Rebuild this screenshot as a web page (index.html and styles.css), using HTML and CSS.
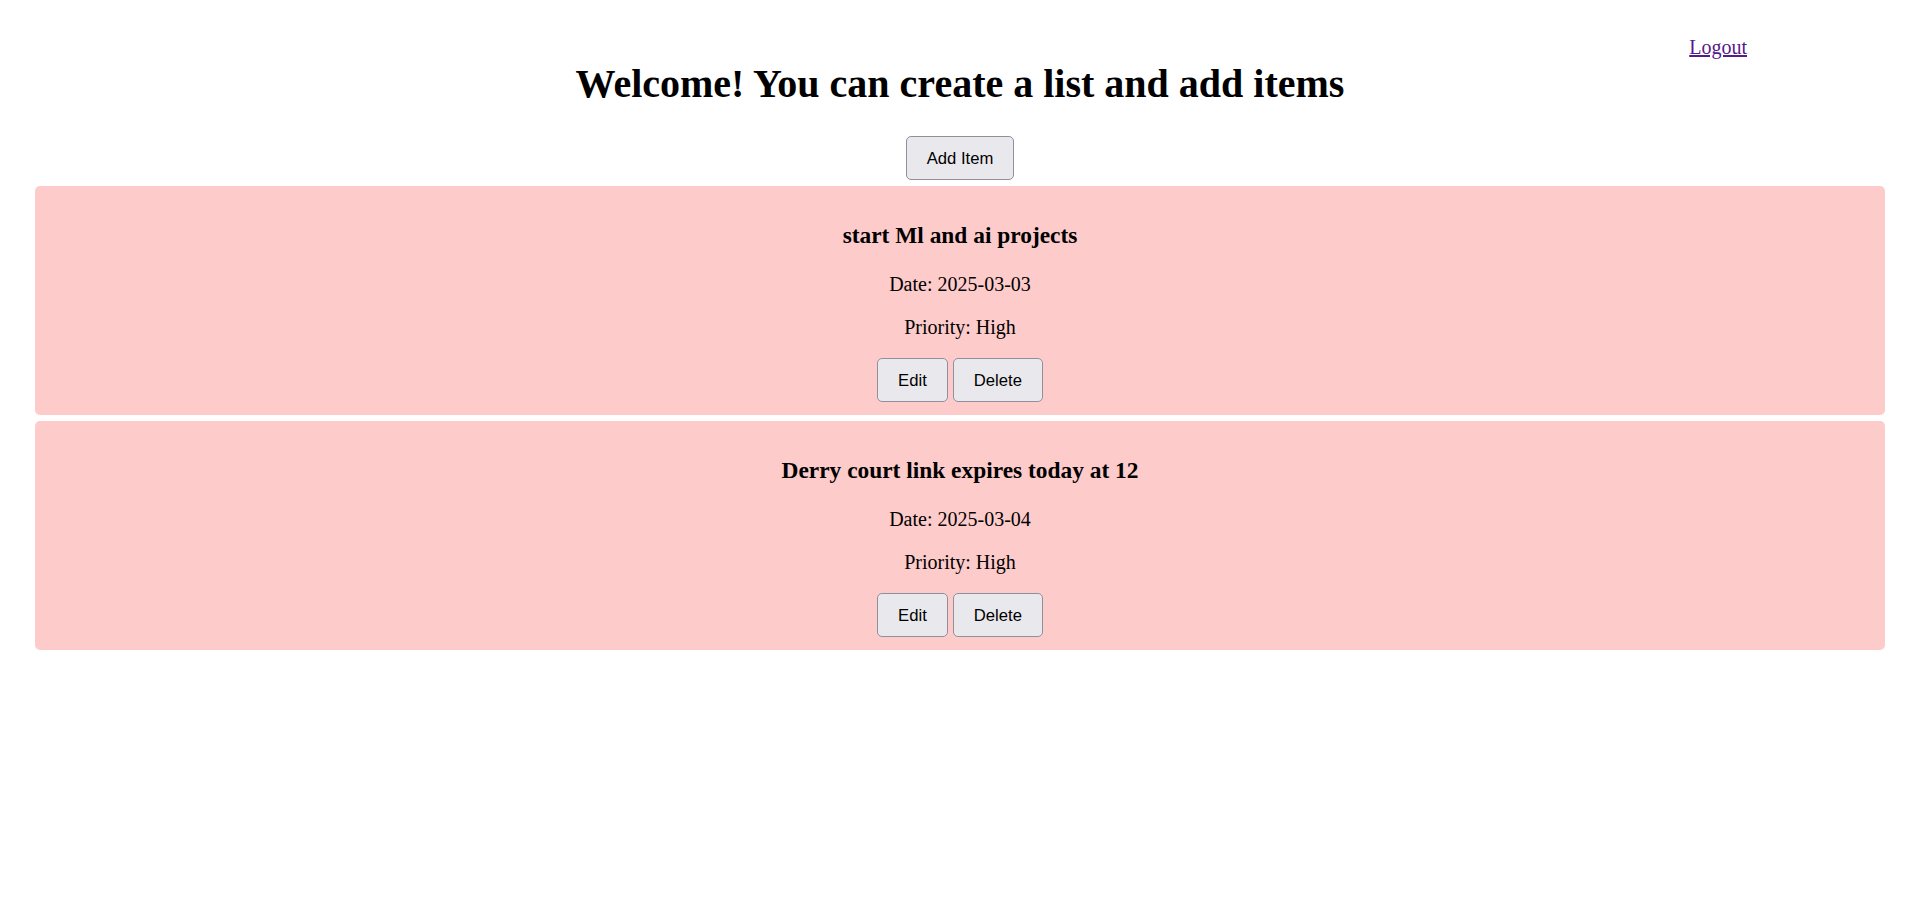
FILE: index.html
```html
<!DOCTYPE html>
<html lang="en">
<head>
<meta charset="utf-8">
<title>Todo List</title>
<link rel="stylesheet" href="styles.css">
</head>
<body>
<div class="page">
  <div class="topbar">
    <a class="logout" href="#">Logout</a>
  </div>
  <h1 class="title">Welcome! You can create a list and add items</h1>
  <div class="actions">
    <button class="btn" type="button">Add Item</button>
  </div>
  <div class="list">
    <div class="card">
      <h3 class="card-title">start Ml and ai projects</h3>
      <p class="card-line">Date: 2025-03-03</p>
      <p class="card-line">Priority: High</p>
      <div class="card-buttons">
        <button class="btn" type="button">Edit</button>
        <button class="btn" type="button">Delete</button>
      </div>
    </div>
    <div class="card">
      <h3 class="card-title">Derry court link expires today at 12</h3>
      <p class="card-line">Date: 2025-03-04</p>
      <p class="card-line">Priority: High</p>
      <div class="card-buttons">
        <button class="btn" type="button">Edit</button>
        <button class="btn" type="button">Delete</button>
      </div>
    </div>
  </div>
</div>
</body>
</html>
```
FILE: styles.css
```css
html, body {
  margin: 0;
  padding: 0;
  background: #ffffff;
}
body {
  font-family: "Liberation Serif", "Times New Roman", serif;
  font-size: 20px;
  color: #000;
}
.page {
  padding: 0 35px;
}
.topbar {
  display: flex;
  justify-content: flex-end;
  padding-top: 36px;
  padding-right: 138px;
  line-height: 23px;
}
.logout {
  color: #551a8b;
  text-decoration: underline;
  font-size: 20px;
}
.title {
  margin: 2px 0 0;
  font-size: 40px;
  font-weight: bold;
  line-height: 46px;
  text-align: center;
}
.actions {
  display: flex;
  justify-content: center;
  margin-top: 29px;
}
.btn {
  font-family: "Liberation Sans", Arial, sans-serif;
  font-size: 16.67px;
  line-height: 20px;
  padding: 12px 20px 10px;
  border: 1px solid #8f8f9d;
  border-radius: 5px;
  background: #e9e9ed;
  color: #000;
  margin: 0;
}
.list {
  margin-top: 6px;
  display: flex;
  flex-direction: column;
  gap: 6px;
}
.card {
  background: #fecbcb;
  border-radius: 5px;
  padding: 12.5px;
  text-align: center;
}
.card-title {
  margin: 23.4px 0;
  font-size: 23.4px;
  line-height: 27px;
  font-weight: bold;
}
.card-line {
  margin: 20px 0;
  padding: 1px 0 0;
  font-size: 20px;
  line-height: 22px;
}
.card-buttons {
  display: flex;
  justify-content: center;
  gap: 5px;
}
```
